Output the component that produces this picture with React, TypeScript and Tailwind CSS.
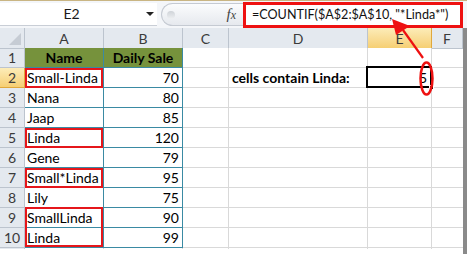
import React from "react";

const COLS = ["A", "B", "C", "D", "E", "F"];

const DATA: { name: string; sale: string; box?: "single" | "double" }[] = [
  { name: "Small-Linda", sale: "70", box: "single" },
  { name: "Nana", sale: "80" },
  { name: "Jaap", sale: "85" },
  { name: "Linda", sale: "120", box: "single" },
  { name: "Gene", sale: "79" },
  { name: "Small*Linda", sale: "95", box: "single" },
  { name: "Lily", sale: "75" },
  { name: "SmallLinda", sale: "90", box: "double" },
  { name: "Linda", sale: "99" },
];

const hdr = "border-r border-b border-[#bcc4ce] bg-[#e4e9ef] text-[#3b3b3b] text-center leading-[20px]";
const hdrSel = "border-r border-b border-[#e0a83c] bg-gradient-to-b from-[#fcecb8] to-[#f6cf73] text-[#3b3b3b] text-center leading-[20px]";
const grid = "border-r border-b border-[#d9d9d9] bg-white";
const teal = "border-r border-b border-[#3a8aa3] bg-white";

export default function App() {
  return (
    <div
      className="relative w-[467px] h-[254px] overflow-hidden bg-white text-[14px] text-black"
      style={{ fontFamily: "Lato, 'Liberation Sans', sans-serif" }}
    >
      {/* Formula bar */}
      <div className="h-[28px] border-t border-[#c9b583] bg-[#f4f6f9] flex items-start pt-[2px]">
        <div className="w-[143px] h-[23px] bg-white border-b border-[#c9ced6] text-center leading-[22px] text-[#1b1b1b]">
          E2
        </div>
        <div className="w-[14px] h-[23px] bg-white border-b border-[#c9ced6] flex items-center justify-center">
          <div className="w-0 h-0 border-l-[4px] border-r-[4px] border-t-[4px] border-l-transparent border-r-transparent border-t-[#222]" />
        </div>
        <div className="w-[4px]" />
        <div className="w-[82px] h-[23px] rounded-l-full border border-r-0 border-[#c5cad2] bg-gradient-to-b from-[#fbfcfd] to-[#e6e9ee] flex items-center pl-[5px]">
          <div className="w-[8px] h-[8px] rounded-full bg-gradient-to-b from-[#cfd3d8] to-[#eef0f2]" />
          <div className="flex-1" />
          <span
            className="italic text-[15px] text-[#444] pr-[7px]"
            style={{ fontFamily: "'Liberation Serif', serif" }}
          >
            f<span className="text-[12px]">x</span>
          </span>
        </div>
        <div className="w-[220px] h-[26px] -mt-[1px] border-[3px] border-[#ee1111] bg-white pl-[6px] leading-[19px] text-[12.6px] whitespace-nowrap overflow-hidden text-[#111]">
          =COUNTIF($A$2:$A$10, "*Linda*")
        </div>
      </div>

      {/* Sheet */}
      <div className="flex">
        <div className="grid grid-cols-[25px_79px_79px_46px_139px_64px_31px] auto-rows-[20px] [&>*]:h-[20px]">
          {/* column headers */}
          <div className={`${hdr} relative !h-[21px]`}>
            <svg className="absolute right-[3px] bottom-[3px]" width="12" height="12">
              <polygon points="12,0 12,12 0,12" fill="#c6ccd4" />
            </svg>
          </div>
          {COLS.map((c) => (
            <div key={c} className={`${c === "E" ? hdrSel : hdr} !h-[21px] leading-[21px]`}>
              {c}
            </div>
          ))}

          {/* row 1 */}
          <div className={hdr}>1</div>
          <div className="border-r border-b border-[#3a8aa3] bg-[#76923c] font-bold text-center leading-[19px]">Name</div>
          <div className="border-r border-b border-[#3a8aa3] bg-[#76923c] font-bold text-center leading-[19px]">Daily Sale</div>
          <div className={grid} />
          <div className={grid} />
          <div className={grid} />
          <div className="border-b border-[#d9d9d9]" />

          {DATA.map((r, i) => {
            const row = i + 2;
            return (
              <React.Fragment key={row}>
                <div className={row === 2 ? hdrSel : hdr}>{row}</div>
                <div className={`${teal} relative pl-[2px] leading-[19px] whitespace-nowrap`}>
                  {r.name}
                  {r.box === "single" && (
                    <div className="absolute z-10 left-0 right-0 top-0 -bottom-px border-2 border-[#e5161b]" />
                  )}
                  {r.box === "double" && (
                    <div className="absolute z-10 left-0 right-0 -top-px h-[40px] border-2 border-[#e5161b]" />
                  )}
                </div>
                <div className={`${teal} text-right pr-[3px] leading-[19px]`}>{r.sale}</div>
                <div className={grid} />
                <div className={`${grid} pl-[3px] font-bold leading-[19px] whitespace-nowrap`}>
                  {row === 2 ? "cells contain Linda:" : ""}
                </div>
                <div className={`${grid} relative text-right pr-[4px] leading-[19px]`}>
                  {row === 2 && (
                    <>
                      5
                      <div className="absolute z-10 -left-[2px] -top-[2px] -right-px -bottom-px border-2 border-black" />
                      <div className="absolute z-10 -right-[3px] -bottom-[3px] w-[5px] h-[5px] bg-black border border-white" />
                    </>
                  )}
                </div>
                <div className="border-b border-[#d9d9d9]" />
              </React.Fragment>
            );
          })}

          {/* partial row 11 */}
          <div className="!h-[1px] border-r border-[#bcc4ce] bg-[#e4e9ef]" />
          <div className="!h-[1px] border-r border-[#d9d9d9]" />
          <div className="!h-[1px] border-r border-[#d9d9d9]" />
          <div className="!h-[1px] border-r border-[#d9d9d9]" />
          <div className="!h-[1px] border-r border-[#d9d9d9]" />
          <div className="!h-[1px] border-r border-[#d9d9d9]" />
          <div className="!h-[1px]" />
        </div>
        <div className="w-[4px] bg-[#8a8a8a]" />
      </div>
      <div className="h-[5px] bg-gradient-to-r from-[#e2e2e2] via-[#8a8a8a] to-[#8a8a8a]" />

      {/* annotation: arrow + ellipse */}
      <svg className="absolute z-20 left-0 top-0 pointer-events-none" width="467" height="254">
        <ellipse cx="426.5" cy="78.5" rx="6" ry="16" fill="none" stroke="#ee1111" strokeWidth="2.5" />
        <polygon points="392,19 396,35 410,26" fill="#ee1111" />
        <line x1="403" y1="30" x2="423" y2="58" stroke="#ee1111" strokeWidth="2.2" />
      </svg>
    </div>
  );
}
